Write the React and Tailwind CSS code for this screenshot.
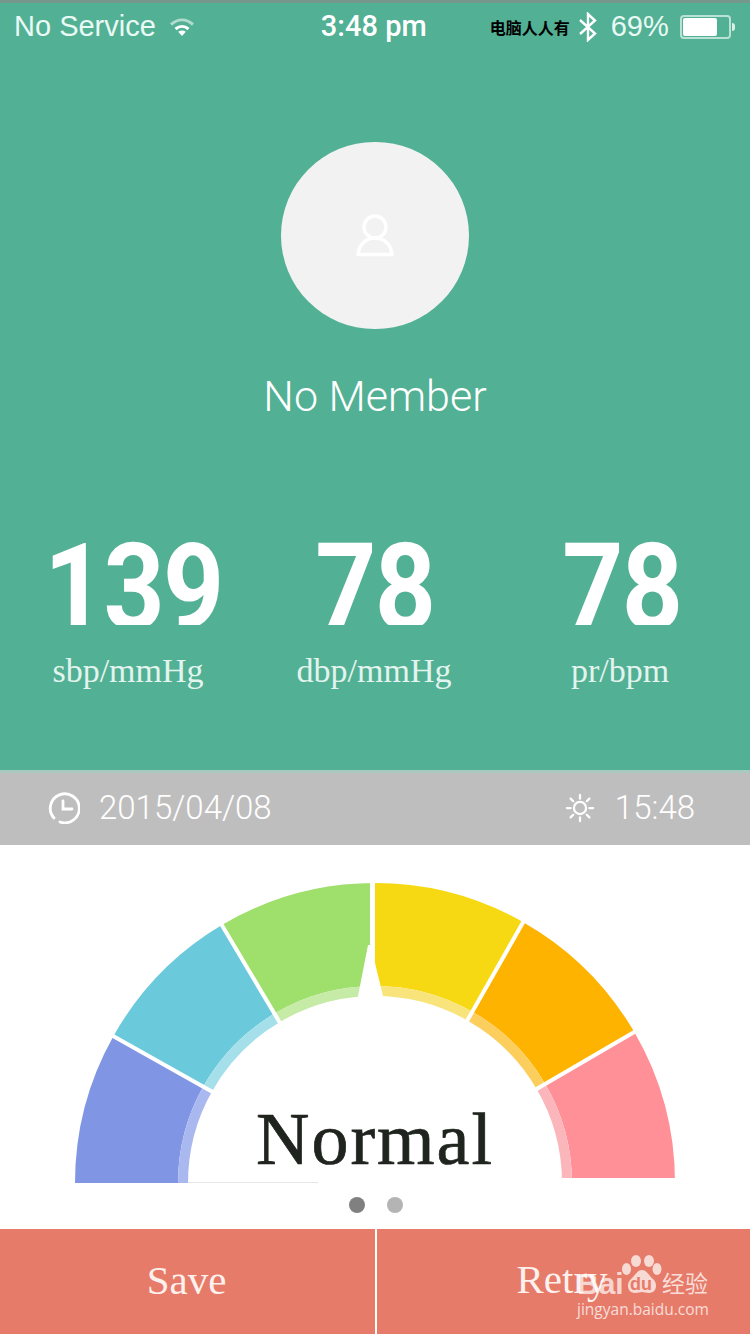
import React from "react";

const CX = 375, CY = 308;
const pt = (r, a) => {
  const t = (a * Math.PI) / 180;
  return `${(CX - r * Math.cos(t)).toFixed(2)} ${(CY - r * Math.sin(t)).toFixed(2)}`;
};
const sector = (r0, r1, a0, a1) =>
  `M${pt(r1, a0)} A${r1} ${r1} 0 0 1 ${pt(r1, a1)} L${pt(r0, a1)} A${r0} ${r0} 0 0 0 ${pt(r0, a0)} Z`;

const segs = [
  [0, 29.3, "#8096e4", "#aab8f0"],
  [29.3, 59.3, "#6bc9dc", "#a4dfea"],
  [59.3, 90, "#9fdf6b", "#c5eba6"],
  [90, 119.6, "#f7d913", "#f8e47a"],
  [119.6, 149.8, "#fdb300", "#fcce5e"],
  [149.8, 180, "#ff9097", "#fbb6bb"],
];

function Gauge() {
  return (
    <svg width="750" height="310" viewBox="0 0 750 310" className="block">
      {segs.map(([a0, a1, c, p]) => (
        <g key={a0}>
          <path d={sector(197, 300, a0, a1)} fill={c} />
          <path d={sector(187, 197, a0, a1)} fill={p} />
        </g>
      ))}
      {[29.3, 59.3, 119.6, 149.8].map((a) => (
        <line key={a} x1={CX - 180 * Math.cos((a * Math.PI) / 180)} y1={CY - 180 * Math.sin((a * Math.PI) / 180)} x2={CX - 305 * Math.cos((a * Math.PI) / 180)} y2={CY - 305 * Math.sin((a * Math.PI) / 180)} stroke="#fff" strokeWidth="4" />
      ))}
      <polygon points="370,0 375,0 375,88 383,121 383,135 358,135 358,121 368,70 370,70" fill="#fff" />
      <rect x="562" y="303" width="116" height="8" fill="#fff" />
      <rect x="188" y="307" width="130" height="1" fill="#e6e6e6" />
    </svg>
  );
}

function Wifi() {
  return (
    <svg width="26" height="24" viewBox="0 0 26 24" fill="none" stroke="#fff">
      <path d="M2 9.500C9 3.500 17 3.500 24 9.500" strokeWidth="3" strokeOpacity=".55" />
      <path d="M6.500 14C10.500 10.500 15.500 10.500 19.500 14" strokeWidth="3" />
      <path d="M13 21l-3.800-4.200c2.300-1.600 5.300-1.600 7.600 0z" fill="#fff" stroke="none" />
    </svg>
  );
}

function Bluetooth() {
  return (
    <svg width="20" height="30" viewBox="0 0 20 30" fill="none" stroke="#fff" strokeWidth="2.400">
      <path d="M2 8l15 13.500L10 28V2l7 6.500L2 22" />
    </svg>
  );
}

function Clock() {
  return (
    <svg width="32" height="32" viewBox="0 0 32 32" fill="none" stroke="#fff" strokeWidth="2.800" strokeLinecap="round">
      <path d="M6 26A14.500 14.500 0 1 1 12 30" />
      <path d="M15 9v8h9" />
    </svg>
  );
}

function Sun() {
  return (
    <svg width="30" height="30" viewBox="0 0 32 32" fill="none" stroke="#fff" strokeWidth="2.400" strokeLinecap="round">
      <circle cx="16" cy="16" r="6.500" />
      <path d="M16 2v4M16 26v4M2 16h4M26 16h4M6 6l2.800 2.800M23.200 23.200L26 26M6 26l2.800-2.800M23.200 8.800L26 6" />
    </svg>
  );
}

function Person() {
  return (
    <svg width="40" height="44" viewBox="0 0 40 44" fill="none" stroke="#fff" strokeWidth="3.500" strokeLinejoin="round">
      <circle cx="20" cy="14" r="11" />
      <path d="M3 41.500C4 31.500 11 25 20 25s16 6.500 17 16.500z" />
    </svg>
  );
}

function Paw() {
  return (
    <svg width="40" height="40" viewBox="0 0 40 40" fill="#fff" fillOpacity=".72">
      <ellipse cx="4.500" cy="14" rx="4.500" ry="6" />
      <ellipse cx="14" cy="6" rx="5" ry="6" />
      <ellipse cx="27" cy="6" rx="5" ry="6" />
      <ellipse cx="35" cy="14" rx="4.500" ry="6" />
      <path d="M20 15c-5 0-7 6-11 9-5 4-4 14 4 14 3 0 5-1 7-1s4 1 7 1c8 0 9-10 4-14-4-3-6-9-11-9z" />
    </svg>
  );
}

const Stat = ({ value, label, shift }) => (
  <div className="flex flex-col items-center">
    <div className={`h-[84px] overflow-hidden font-['Roboto',sans-serif] text-[120px] font-bold leading-[94px] text-white scale-x-[0.89] tracking-[-2px] ${shift}`}>
      {value}
    </div>
    <div className="mt-[28px] font-['Liberation_Serif',serif] text-[34px] leading-[36px] text-[#e3f4ee]">{label}</div>
  </div>
);

export default function App() {
  return (
    <div className="relative h-[1334px] w-[750px] overflow-hidden bg-white font-['Liberation_Sans',sans-serif]">
      <section className="h-[770px] border-t-[3px] border-[#74998c] bg-[#52b094]">
        <div className="flex h-[47px] items-center pl-[14px] pr-[11px] text-white">
          <span className="text-[29px] font-light leading-none text-[#eafaf4]">No Service</span>
          <span className="ml-[13px]"><Wifi /></span>
          <span className="ml-[126px] font-['Roboto',sans-serif] text-[29px] font-medium leading-none">3:48 pm</span>
          <span className="ml-[63px] w-[84px] font-['Noto_Sans_CJK_SC',serif] text-[16px] font-bold leading-none whitespace-nowrap text-black">电脑人人有</span>
          <span className="ml-[4px]"><Bluetooth /></span>
          <span className="ml-[13px] text-[29px] leading-none text-[#eafaf4]">69%</span>
          <span className="relative ml-[11px] flex h-[24px] w-[51px] items-center rounded-[4px] border-2 border-[#b9e2d5] p-[1px]">
            <span className="h-full w-[34px] rounded-[2px] bg-white" />
            <span className="absolute -right-[6px] top-[6px] h-[8px] w-[3px] rounded-r bg-[#d8f0e8]" />
          </span>
        </div>
        <div className="mx-auto mt-[92px] flex h-[187px] w-[188px] items-center justify-center rounded-full bg-[#f2f2f2] pb-[2px]">
          <Person />
        </div>
        <div className="mt-[43px] text-center font-['Roboto',sans-serif] text-[43px] font-light leading-[48px] text-white">No Member</div>
        <div className="mt-[121px] grid grid-cols-3 pl-[5px] pr-[7px]">
          <Stat value="139" label="sbp/mmHg" shift="ml-[10px]" />
          <Stat value="78" label="dbp/mmHg" shift="ml-[2px]" />
          <Stat value="78" label="pr/bpm" shift="ml-[4px]" />
        </div>
      </section>

      <section className="flex h-[75px] items-center border-t-[3px] border-[#a9c9be] bg-[#bfbebe] pl-[48px] pr-[55px] pb-[3px] font-['Roboto',sans-serif] text-[33px] font-light leading-none text-white">
        <Clock />
        <span className="ml-[19px]">2015/04/08</span>
        <span className="ml-auto"><Sun /></span>
        <span className="ml-[20px]">15:48</span>
      </section>

      <section className="relative h-[384px] pt-[30px]">
        <Gauge />
        <div className="absolute left-0 right-0 top-[250px] text-center font-['Liberation_Serif',serif] text-[74px] leading-[88px] tracking-[2px] text-[#20241f] [-webkit-text-stroke:0.7px_#20241f]">Normal</div>
        <div className="mt-[12px] flex justify-center gap-[22px] pl-[2px]">
          <span className="h-[16px] w-[16px] rounded-full bg-[#808080]" />
          <span className="h-[16px] w-[16px] rounded-full bg-[#b4b4b4]" />
        </div>
      </section>

      <section className="flex h-[105px] bg-[#e67b69] font-['Liberation_Serif',serif] text-[41px] text-[#fdf1ee]">
        <div className="flex w-[375px] items-center justify-center pb-[2px] pr-[2px]">Save</div>
        <div className="w-[2px] bg-[#fff]" />
        <div className="flex flex-1 items-center justify-center pb-[4px] pr-[3px]">Retry</div>
      </section>

      <div className="absolute left-[577px] top-[1255px] h-[64px] w-[135px] text-white">
        <span className="absolute left-0 top-[14px] font-['Liberation_Sans',sans-serif] text-[30px] font-bold leading-[30px] text-white/70">Bai</span>
        <span className="absolute left-[45px] top-0"><Paw /></span>
        <span className="absolute left-[53px] top-[20px] font-['Liberation_Sans',sans-serif] text-[18px] font-bold leading-[18px] text-[#e67b69]">du</span>
        <span className="absolute left-[85px] top-[14px] font-['Noto_Sans_CJK_SC',sans-serif] text-[23px] leading-[26px] text-white/75">经验</span>
        <span className="absolute left-0 top-[44px] whitespace-nowrap font-['Open_Sans',sans-serif] text-[15.500px] leading-[20px] text-white/75">jingyan.baidu.com</span>
      </div>
    </div>
  );
}
